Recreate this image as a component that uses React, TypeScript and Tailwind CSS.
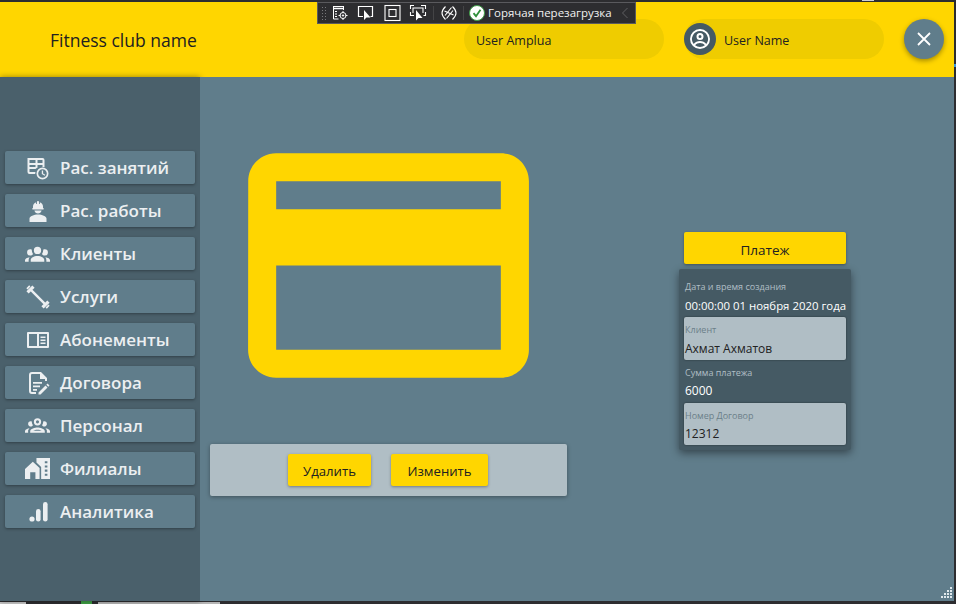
const font = { fontFamily: '"Open Sans", "Noto Sans", sans-serif' };

const Ic = ({ children, w = 24 }: { children: React.ReactNode; w?: number }) => (
  <svg viewBox="0 0 24 24" width={w} height={w} fill="currentColor">{children}</svg>
);

const icons: Record<string, React.ReactNode> = {
  table: (
    <Ic>
      <path fillRule="evenodd" d="M3 2h15a2 2 0 0 1 2 2v7.200a7 7 0 0 0-2-.2V9h-5v2.700a7 7 0 0 0-2 1.300H5v3h6a7 7 0 0 0-.3 2H5a2 2 0 0 1-2-2zM5 4v3h6V4zm8 0v3h5V4zM5 9v2h6V9z" transform="translate(-1.500 0)" />
      <path fillRule="evenodd" d="M17 12a6 6 0 1 1 0 12 6 6 0 0 1 0-12zm0 1.700a4.300 4.300 0 1 0 0 8.600 4.300 4.300 0 0 0 0-8.600zM16.300 15h1.300v3l2.200 1.300-.6 1-2.900-1.700z" transform="translate(-.5 -.5)" />
    </Ic>
  ),
  hat: (
    <Ic>
      <path d="M12 15.500c-4 0-8.500 1.800-8.500 4V23h17v-3.500c0-2.200-4.500-4-8.500-4zM12 2c-.5 0-1 .4-1 .9V5h-.8V3.200C8 3.800 7 5.600 7 7.500V9h-.6v1.500h11.200V9H17V7.500c0-1.900-1-3.700-3.200-4.300V5H13V2.900c0-.5-.5-.9-1-.9zM8.400 11.500c.4 1.700 1.900 3 3.600 3s3.200-1.300 3.600-3z" />
    </Ic>
  ),
  group: (
    <Ic w={25}>
      <path d="M12,5.500A3.500,3.500 0 0,1 15.500,9A3.500,3.500 0 0,1 12,12.500A3.500,3.500 0 0,1 8.500,9A3.500,3.500 0 0,1 12,5.500M5,8C5.560,8 6.080,8.150 6.530,8.420C6.380,9.850 6.800,11.270 7.660,12.380C7.160,13.340 6.160,14 5,14A3,3 0 0,1 2,11A3,3 0 0,1 5,8M19,8A3,3 0 0,1 22,11A3,3 0 0,1 19,14C17.840,14 16.840,13.340 16.340,12.380C17.200,11.270 17.620,9.850 17.470,8.420C17.920,8.150 18.440,8 19,8M5.500,18.250C5.500,16.180 8.410,14.500 12,14.500C15.590,14.500 18.500,16.180 18.500,18.250V20H5.500V18.250M0,20V18.500C0,17.110 1.890,15.940 4.450,15.600C3.860,16.280 3.500,17.220 3.500,18.250V20H0M24,20H20.500V18.250C20.500,17.220 20.140,16.280 19.550,15.600C22.110,15.940 24,17.110 24,18.500V20Z" />
    </Ic>
  ),
  dumbbell: (
    <Ic>
      <g transform="rotate(45 12 12)">
        <path d="M-2.500 10h1.800v4h-1.800zM-.2 7.800h3.200v8.400h-3.200zM3 10.800h18v2.400H3zM21 7.800h3.200v8.400H21zM24.700 10h1.800v4h-1.800z" />
      </g>
    </Ic>
  ),
  book: (
    <Ic>
      <path fillRule="evenodd" d="M2 4h20a1 1 0 0 1 1 1v14a1 1 0 0 1-1 1H2a1 1 0 0 1-1-1V5a1 1 0 0 1 1-1zm1 2v12h8V6zm10 0v12h8V6zm1.500 2.500h5V10h-5zm0 3h5V13h-5zm0 3h5V16h-5z" />
    </Ic>
  ),
  doc: (
    <Ic>
      <path fillRule="evenodd" d="M6 1h9l6 6v3h-2V8h-5V3H6a1 1 0 0 0-1 1v16a1 1 0 0 0 1 1h4v2H6a3 3 0 0 1-3-3V4a3 3 0 0 1 3-3z" />
      <path d="M7 11h9v1.800H7zM7 14.500h7v1.800H7zM7 18h4v1.800H7zM21.500 12.500l2 2-1.200 1.200-2-2zM19.500 14.500l2 2-7 7H12.500v-2z" />
    </Ic>
  ),
  groupOutline: (
    <Ic w={25}>
      <path d="M12,5A3.500,3.500 0 0,0 8.500,8.500A3.500,3.500 0 0,0 12,12A3.500,3.500 0 0,0 15.500,8.500A3.500,3.500 0 0,0 12,5M12,7A1.500,1.500 0 0,1 13.500,8.500A1.500,1.500 0 0,1 12,10A1.500,1.500 0 0,1 10.500,8.500A1.500,1.500 0 0,1 12,7M5.500,8A2.500,2.500 0 0,0 3,10.500C3,11.440 3.530,12.250 4.290,12.680C4.650,12.880 5.060,13 5.500,13C5.940,13 6.350,12.880 6.710,12.680C7.080,12.470 7.390,12.170 7.620,11.810C6.890,10.860 6.500,9.700 6.500,8.500C6.500,8.410 6.500,8.310 6.500,8.220C6.200,8.080 5.860,8 5.500,8M18.500,8C18.140,8 17.800,8.080 17.500,8.220C17.500,8.310 17.500,8.410 17.500,8.500C17.500,9.700 17.110,10.860 16.380,11.810C16.500,12 16.630,12.150 16.780,12.300C16.940,12.450 17.100,12.580 17.290,12.680C17.650,12.880 18.060,13 18.500,13C18.940,13 19.350,12.880 19.710,12.680C20.470,12.250 21,11.440 21,10.500A2.500,2.500 0 0,0 18.500,8M12,14C9.660,14 5,15.170 5,17.500V19H19V17.500C19,15.170 14.340,14 12,14M4.710,14.550C2.780,14.780 0,15.760 0,17.500V19H3V17.070C3,16.060 3.690,15.220 4.710,14.550M19.290,14.550C20.310,15.220 21,16.060 21,17.070V19H24V17.500C24,15.760 21.220,14.780 19.290,14.550M12,16C13.530,16 15.240,16.500 16.230,17H7.770C8.760,16.500 10.470,16 12,16Z" />
    </Ic>
  ),
  city: (
    <Ic w={25}>
      <path d="M0 12.500L7.500 5.500 14 11.500V22H10V15.500H5V22H0z" />
      <path fillRule="evenodd" d="M11 2H24V22H15.500V10.500L11 6.200zM19 5v2h2.500V5zm0 4v2h2.500V9zm0 4v2h2.500v-2zm0 4v2h2.500v-2z" />
    </Ic>
  ),
  chart: (
    <Ic>
      <circle cx="6" cy="19" r="2.600" />
      <rect x="10" y="9" width="4.600" height="12.500" rx="2.300" />
      <rect x="17" y="2" width="4.600" height="19.500" rx="2.300" />
    </Ic>
  ),
};

const menu: [string, string][] = [
  ['table', 'Рас. занятий'],
  ['hat', 'Рас. работы'],
  ['group', 'Клиенты'],
  ['dumbbell', 'Услуги'],
  ['book', 'Абонементы'],
  ['doc', 'Договора'],
  ['groupOutline', 'Персонал'],
  ['city', 'Филиалы'],
  ['chart', 'Аналитика'],
];

const Toolbar = () => (
  <div className="absolute left-[317px] top-[2px] z-10 flex h-[22px] w-[319px] items-center border border-[#5a5a5e] bg-[#2d2d30] text-white">
    <div className="ml-[3px] h-[14px] w-[6px] bg-[radial-gradient(#77777a_1px,transparent_1px)] bg-[length:3px_3px]" />
    <svg className="ml-[4px]" width="18" height="18" viewBox="0 0 18 18" fill="none" stroke="currentColor" strokeWidth="1">
      <path d="M2 2.500h11M2.500 2.500v12.500h5M12.500 2.500v3.500" />
      <path d="M2 4.500h11" strokeWidth="1.500" />
      <path d="M4 7.500h2M4 10h2M4 12.500h2" />
      <circle cx="12" cy="11.500" r="3" />
      <path d="M12 7v2M12 14v2M7.500 11.500h2M14.500 11.500h2" />
      <circle cx="12" cy="11.500" r=".7" fill="currentColor" />
    </svg>
    <svg className="ml-[8px]" width="18" height="18" viewBox="0 0 18 18" fill="none" stroke="currentColor" strokeWidth="1.200">
      <path d="M6 12.500H1.500v-10h14v10h-2" />
      <path d="M7 6v10l2.500-2.500h4z" fill="currentColor" stroke="none" />
    </svg>
    <svg className="ml-[8px]" width="18" height="18" viewBox="0 0 18 18" fill="none" stroke="currentColor" strokeWidth="1.100">
      <rect x="2" y="1.500" width="15" height="15" />
      <rect x="6" y="5.500" width="7" height="7" />
    </svg>
    <svg className="ml-[8px]" width="18" height="18" viewBox="0 0 18 18" fill="none" stroke="currentColor" strokeWidth="1.100">
      <path d="M1.500 5V1.500H5M12 1.500h4.500V5M1.500 8v3.500H5M16.500 8v3.500h-2" />
      <path d="M4 9V4h10v5" />
      <path d="M7 6v10.500l2.500-2.500h4z" fill="currentColor" stroke="none" />
    </svg>
    <div className="ml-[6px] h-[14px] w-px bg-[#444446]" />
    <svg className="ml-[7px]" width="16" height="16" viewBox="0 0 16 16" fill="none" stroke="currentColor" strokeWidth="1.100">
      <path d="M4.500 1.500C2 4 1 6 1 8s1 4 3.500 6.500M11.500 1.500C14 4 15 6 15 8s-1 4-3.500 6.500" />
      <path d="M4 10.500l6.500-8M5.500 13.500l6.500-8M3.500 6l9 4" />
    </svg>
    <div className="ml-[6px] h-[14px] w-px bg-[#444446]" />
    <svg className="ml-[5px] shrink-0" width="16" height="16" viewBox="0 0 16 16">
      <circle cx="8" cy="8" r="7.500" fill="#ffffff" stroke="#3f9c47" strokeWidth="1" />
      <path d="M4.500 8.200l2.500 3 4.500-6.500" fill="none" stroke="#2f8f3a" strokeWidth="1.800" />
    </svg>
    <span className="ml-[3px] whitespace-nowrap text-[11.500px] leading-none text-[#f1f1f1]">Горячая перезагрузка</span>
    <svg className="ml-auto mr-[6px] shrink-0" width="8" height="12" viewBox="0 0 8 12" fill="none" stroke="#5f5f62" strokeWidth="1">
      <path d="M6.500 1L1.500 6l5 5" />
    </svg>
  </div>
);

const yellowBtn = 'rounded-[2px] bg-[#ffd600] pt-[4px] font-medium text-[#212121] shadow-[0_1px_3px_rgba(0,0,0,0.35)]';

export default function App() {
  return (
    <div style={font} className="relative flex h-[604px] w-[956px] flex-col overflow-hidden bg-[#2d2d30]">
      <Toolbar />
      <div className="absolute right-0 top-[64px] h-[3px] w-[2px] bg-[#3794e0]" />
      <div className="absolute right-[82px] top-0 h-[1px] w-[12px] bg-[#d0d0d0]" />
      <div className="mr-[2px] mt-[2px] flex min-h-0 flex-1 flex-col">
        <header className="flex h-[75px] shrink-0 items-center bg-[#ffd600] pb-[1px]">
          <div className="ml-[50px] w-[414px] pt-[3px] text-[17.500px] text-[#212121]">Fitness club name</div>
          <div className="flex h-[40px] w-[200px] items-center rounded-[20px] bg-[#efcc00] pl-[12px] pt-[4px] text-[12.500px] text-[#212121]">User Amplua</div>
          <div className="ml-[20px] flex h-[40px] w-[200px] items-center rounded-[20px] bg-[#efcc00] text-[12.500px] text-[#212121]">
            <div className="flex h-[32px] w-[32px] items-center justify-center rounded-full bg-[#455a64] text-white">
              <svg width="24" height="24" viewBox="0 0 24 24" fill="currentColor">
                <path fillRule="evenodd" d="M12 2a10 10 0 1 0 0 20 10 10 0 0 0 0-20zm0 2a8 8 0 0 1 6.300 12.900C16.900 15.200 14.500 14 12 14s-4.900 1.200-6.300 2.900A8 8 0 0 1 12 4zm0 2a3.500 3.500 0 1 0 0 7 3.500 3.500 0 0 0 0-7zm0 2a1.500 1.500 0 1 1 0 3 1.500 1.500 0 0 1 0-3zm0 8c1.900 0 3.700.8 4.900 2.300A8 8 0 0 1 12 20a8 8 0 0 1-4.900-1.700C8.300 16.800 10.100 16 12 16z" />
              </svg>
            </div>
            <span className="ml-[8px] pt-[4px]">User Name</span>
          </div>
          <div className="ml-[20px] flex h-[40px] w-[40px] items-center justify-center rounded-full bg-[#607d8b] text-white shadow-[0_2px_5px_rgba(0,0,0,0.35)]">
            <svg width="14" height="14" viewBox="0 0 14 14" stroke="currentColor" strokeWidth="1.800"><path d="M1 1l12 12M13 1L1 13" /></svg>
          </div>
        </header>
        <div className="flex min-h-0 flex-1 bg-[#607d8b]">
          <aside className="relative flex w-[200px] shrink-0 flex-col items-center justify-center gap-[10px] bg-[#4a606b] pt-[1px] shadow-[0_0_6px_rgba(0,0,0,0.4)]">
            {menu.map(([k, label]) => (
              <div key={k} className="flex h-[33px] w-[190px] items-center rounded-[2px] bg-[#607d8b] text-[#eceff1] shadow-[0_1px_3px_rgba(0,0,0,0.35)]">
                <div className="ml-[20px] flex w-[25px] justify-center">{icons[k]}</div>
                <span className="ml-[10px] text-[17px] font-semibold">{label}</span>
              </div>
            ))}
          </aside>
          <main className="relative flex min-w-0 flex-1 bg-[#607d8b]">
            <div className="ml-[10px] mt-[20px] flex w-[357px] flex-col items-center">
              <svg width="337" height="337" viewBox="0 0 24 24" fill="#ffd600">
                <path d="M20 4H4c-1.110 0-1.990.89-1.990 2L2 18c0 1.110.89 2 2 2h16c1.110 0 2-.89 2-2V6c0-1.110-.89-2-2-2zm0 14H4v-6h16v6zm0-10H4V6h16v2z" />
              </svg>
              <div className="mt-[10px] flex h-[52px] w-full items-center justify-center gap-[20px] rounded-[2px] bg-[#b0bec5] pr-[1px] shadow-[0_1px_4px_rgba(0,0,0,0.35)]">
                <button className={`h-[32px] w-[83px] text-[13.200px] ${yellowBtn}`}>Удалить</button>
                <button className={`h-[32px] w-[97px] text-[13.200px] ${yellowBtn}`}>Изменить</button>
              </div>
            </div>
            <div className="ml-[112px] mt-[155px] flex w-[172px] flex-col items-center gap-[5px]">
              <button className={`h-[32px] w-[162px] text-[13.500px] ${yellowBtn}`}>Платеж</button>
              <div className="flex h-[181px] w-full flex-col rounded-[2px] bg-[#455a64] px-[5px] shadow-[0_3px_8px_rgba(0,0,0,0.45)]">
                <div className="flex h-[48px] flex-col pl-[1px] pt-[12px] text-white">
                  <span className="text-[9px] leading-[12px] text-[#b0bec5]">Дата и время создания</span>
                  <span className="mt-[5px] whitespace-nowrap text-[11.400px] leading-[16px]">00:00:00 01 ноября 2020 года</span>
                </div>
                <div className="flex h-[43px] flex-col rounded-[2px] bg-[#b0bec5] pl-[1px] pt-[7px] shadow-[0_0_2px_rgba(0,0,0,0.5)]">
                  <span className="text-[9px] leading-[12px] text-[#6b7f89]">Клиент</span>
                  <span className="mt-[5px] text-[12px] leading-[16px] text-[#212121]">Ахмат Ахматов</span>
                </div>
                <div className="flex h-[43px] flex-col pl-[1px] pt-[7px] text-white">
                  <span className="text-[9px] leading-[12px] text-[#b0bec5]">Сумма платежа</span>
                  <span className="mt-[4px] text-[12px] leading-[16px]">6000</span>
                </div>
                <div className="flex h-[42px] flex-col rounded-[2px] bg-[#b0bec5] pl-[1px] pt-[7px] shadow-[0_0_2px_rgba(0,0,0,0.5)]">
                  <span className="text-[9px] leading-[12px] text-[#6b7f89]">Номер Договор</span>
                  <span className="mt-[4px] text-[12px] leading-[16px] text-[#212121]">12312</span>
                </div>
              </div>
            </div>
          </main>
        </div>
      </div>
      <div className="flex h-[3px] shrink-0 items-end">
        <div className="h-[2px] w-[26px] bg-[#c8c8c8]" />
        <div className="ml-[55px] h-[3px] w-[11px] bg-[#3fa045]" />
        <div className="ml-[6px] h-[2px] w-[122px] bg-[#b5b5b5]" />
      </div>
      <svg className="absolute bottom-[4px] right-[3px]" width="13" height="13" viewBox="0 0 13 13" fill="#dfe8ec">
        <rect x="10" y="0" width="2" height="2" /><rect x="7" y="3" width="2" height="2" /><rect x="10" y="3" width="2" height="2" />
        <rect x="4" y="6" width="2" height="2" /><rect x="7" y="6" width="2" height="2" /><rect x="10" y="6" width="2" height="2" />
        <rect x="1" y="9" width="2" height="2" /><rect x="4" y="9" width="2" height="2" /><rect x="7" y="9" width="2" height="2" /><rect x="10" y="9" width="2" height="2" />
      </svg>
    </div>
  );
}
